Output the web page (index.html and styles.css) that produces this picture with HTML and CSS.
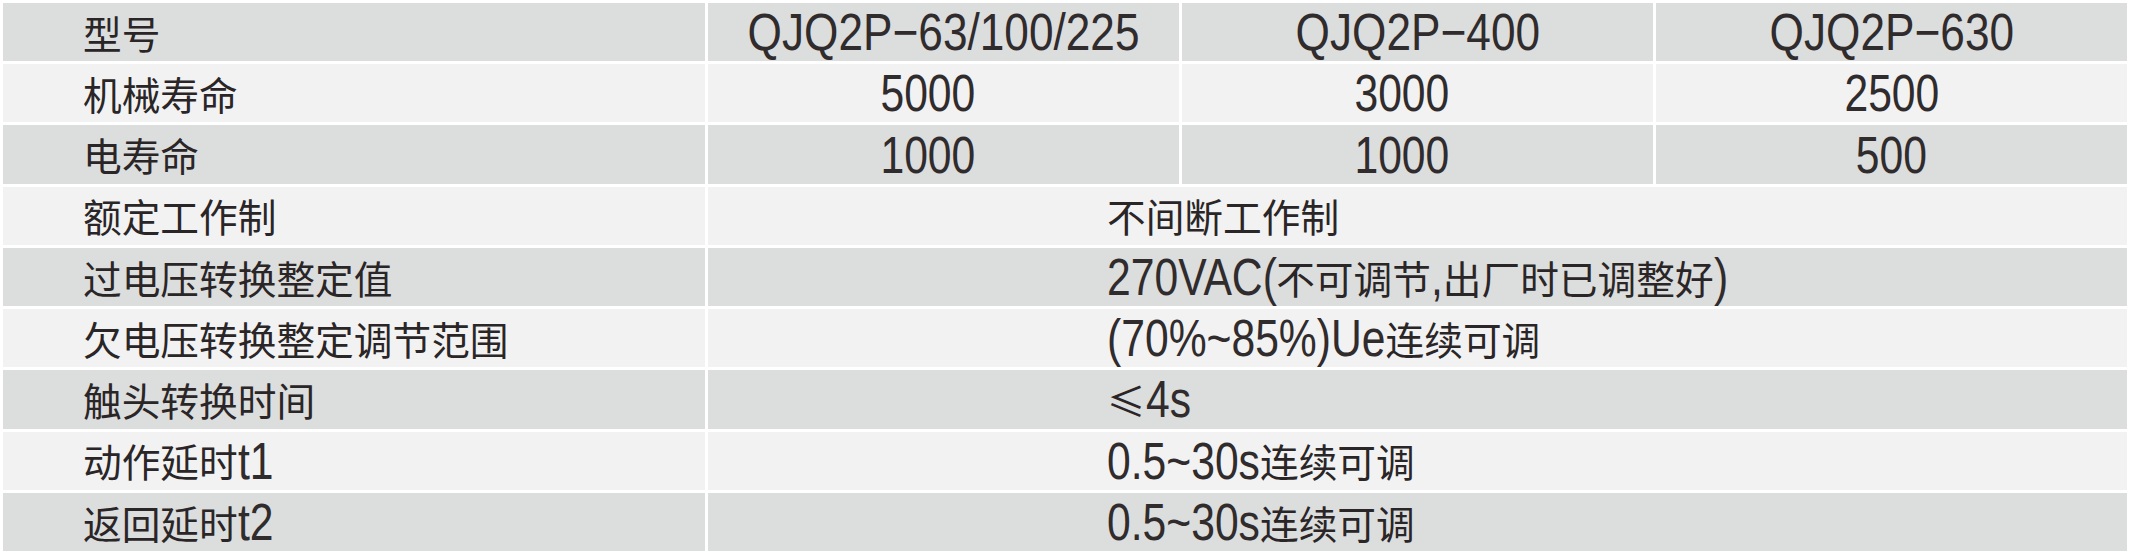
FILE: index.html
```html
<!DOCTYPE html>
<html lang="zh-CN">
<head>
<meta charset="utf-8">
<title>QJQ2P 技术参数</title>
<link rel="stylesheet" href="styles.css">
</head>
<body>
<div class="table">
  <div class="cell head dark">型号</div>
  <div class="cell mid model dark"><span class="n">QJQ2P−63/100/225</span></div>
  <div class="cell mid model dark"><span class="n">QJQ2P−400</span></div>
  <div class="cell mid model dark"><span class="n">QJQ2P−630</span></div>

  <div class="cell head light">机械寿命</div>
  <div class="cell mid shift light"><span class="n">5000</span></div>
  <div class="cell mid shift light"><span class="n">3000</span></div>
  <div class="cell mid light"><span class="n">2500</span></div>

  <div class="cell head dark">电寿命</div>
  <div class="cell mid shift dark"><span class="n">1000</span></div>
  <div class="cell mid shift dark"><span class="n">1000</span></div>
  <div class="cell mid dark"><span class="n">500</span></div>

  <div class="cell head light">额定工作制</div>
  <div class="cell span light">不间断工作制</div>

  <div class="cell head dark">过电压转换整定值</div>
  <div class="cell span dark"><span class="n volt">270VAC(</span>不可调节<span class="n comma">,</span>出厂时已调整好<span class="n paren">)</span></div>

  <div class="cell head light">欠电压转换整定调节范围</div>
  <div class="cell span light"><span class="n pct">(70%~85%)Ue</span>连续可调</div>

  <div class="cell head dark">触头转换时间</div>
  <div class="cell span dark">≤<span class="n sec">4s</span></div>

  <div class="cell head light">动作延时<span class="n tn">t1</span></div>
  <div class="cell span light"><span class="n range">0.5~30s</span>连续可调</div>

  <div class="cell head dark">返回延时<span class="n tn">t2</span></div>
  <div class="cell span dark"><span class="n range">0.5~30s</span>连续可调</div>
</div>
</body>
</html>
```

FILE: styles.css
```css
html, body {
  margin: 0;
  padding: 0;
  background: #ffffff;
}

body {
  width: 2130px;
  height: 554px;
  overflow: hidden;
  font-family: "Noto Sans CJK SC", "Liberation Sans", sans-serif;
  color: #2a2526;
}

.table {
  box-sizing: border-box;
  width: 2130px;
  height: 554px;
  padding: 3px;
  display: grid;
  grid-template-columns: 702px 471px 471px 471px;
  grid-template-rows: repeat(9, 1fr);
  gap: 3px;
}

.cell {
  display: flex;
  align-items: center;
  font-size: 38.7px;
  line-height: 1;
  white-space: nowrap;
}

.dark { background: #dcdddd; }
.light { background: #f2f2f2; }

.head {
  padding-left: 80px;
}

.mid {
  justify-content: center;
}

/* the numbers in the first two model columns sit slightly left of centre */
.mid.shift {
  padding-right: 32px;
}

.span {
  grid-column: 2 / 5;
  padding-left: 399px;
}

/* Latin runs: Arial-metric sans condensed to Arial Narrow proportions */
.n {
  display: inline-block;
  font-family: "Liberation Sans", Arial, sans-serif;
  font-size: 52px;
  line-height: 1;
  color: #302b2c;
  transform: scaleX(0.82);
  transform-origin: 0 50%;
}

.mid .n {
  transform-origin: 50% 50%;
}

.model .n {
  transform: scaleX(0.85);
}

/* give back the width removed by the horizontal condensing (18% of the run) */
.n.volt  { margin-right: -0.730em; }
.n.comma { margin-right: -0.050em; }
.n.paren { margin-right: -0.060em; }
.n.pct   { margin-right: -1.175em; }
.n.sec   { margin-right: -0.190em; }
.n.range { margin-right: -0.645em; }
.n.tn    { margin-right: -0.150em; }
```
